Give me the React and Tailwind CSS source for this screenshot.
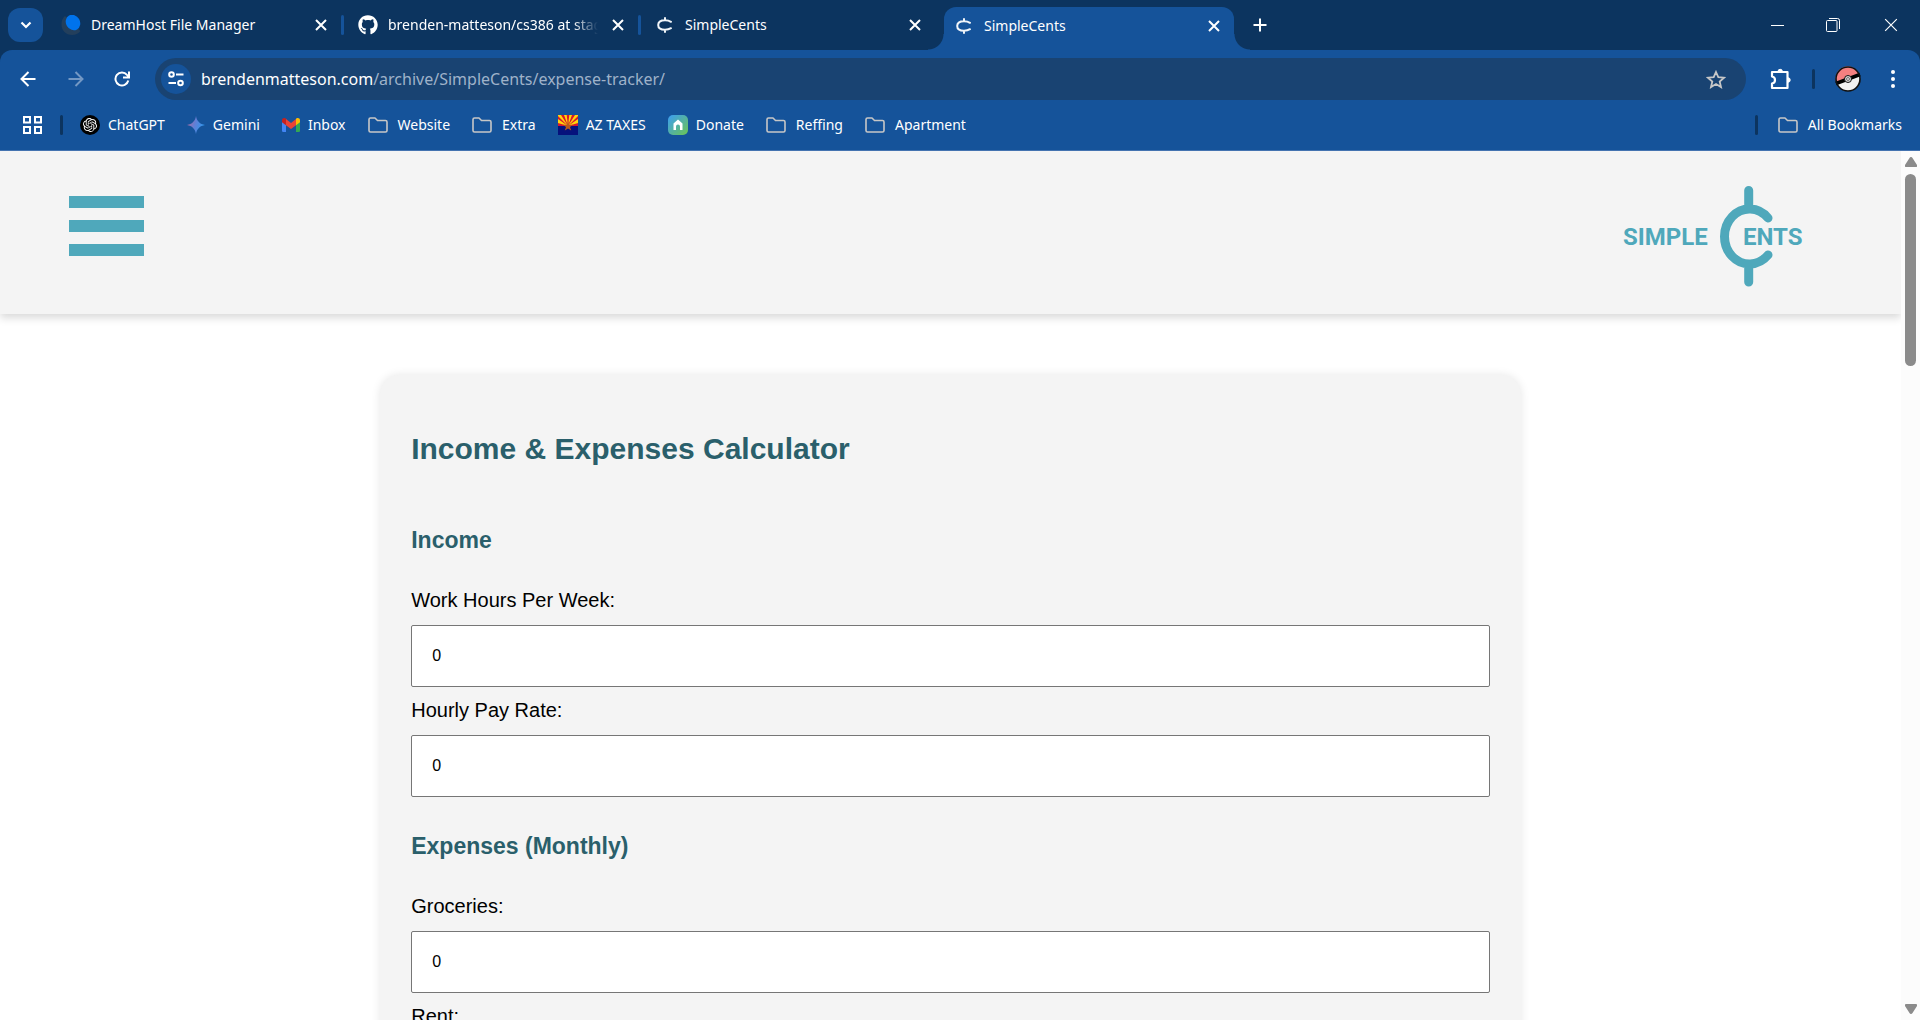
import React from "react";
import { SiOpenai } from "react-icons/si";
import { FaGithub } from "react-icons/fa";

const ui = "font-['Noto_Sans','Open_Sans',sans-serif]";

function DreamHostIcon() {
  return (
    <svg width="20" height="20" viewBox="0 0 20 20" aria-hidden="true">
      <path d="M4 1C1.500 3 .5 6 .5 9.500 .5 15.500 5 20 11 20c3.500 0 6.500-1.500 8.500-4L12 9z" fill="#233f5c" />
      <ellipse cx="12" cy="7.500" rx="7" ry="8" fill="#0073ec" transform="rotate(-30 12 7.500)" />
    </svg>
  );
}

function CentIcon() {
  return (
    <svg width="16" height="16" viewBox="0 0 16 16" fill="none" stroke="#f1f5f9" strokeWidth="2" strokeLinecap="round" aria-hidden="true">
      <path d="M14 4.800C12.500 3.800 10.500 3.200 8 3.200 4 3.200 1.200 5 1.200 8S4 12.800 8 12.800c2.500 0 4.500-.6 6-1.600M8 1v2M8 13v2" />
    </svg>
  );
}

function CloseIcon({ size = 12, w = 2 }) {
  return (
    <svg width={size} height={size} viewBox="0 0 12 12" fill="none" stroke="#fff" strokeWidth={w} aria-hidden="true">
      <path d="M1 1l10 10M11 1L1 11" />
    </svg>
  );
}

function FolderIcon() {
  return (
    <svg className="mr-0.5" width="20" height="16" viewBox="0 0 20 16" fill="none" stroke="#c7c7c7" strokeWidth="1.600" strokeLinejoin="round" aria-hidden="true">
      <path d="M1 2.500Q1 1 2.500 1H7l2.500 2.500h8Q19 3.500 19 5v8.500q0 1.500-1.500 1.500h-15Q1 15 1 13.500z" />
    </svg>
  );
}

function GeminiIcon() {
  return (
    <svg width="18" height="18" viewBox="0 0 18 18" aria-hidden="true">
      <defs>
        <linearGradient id="gem" x1="0" x2="1" y1="0.300" y2="0.600">
          <stop offset="0" stopColor="#b06a9c" />
          <stop offset=".45" stopColor="#5f7fd6" />
          <stop offset="1" stopColor="#2b9bf0" />
        </linearGradient>
      </defs>
      <path d="M9 0C9.700 5 13 8.300 18 9 13 9.700 9.700 13 9 18 8.300 13 5 9.700 0 9 5 8.300 8.300 5 9 0z" fill="url(#gem)" />
    </svg>
  );
}

function GmailIcon() {
  return (
    <svg width="18" height="14" viewBox="0 0 18 14" aria-hidden="true">
      <path d="M0 3v9.700Q0 14 1.300 14H4V6z" fill="#4285f4" />
      <path d="M18 3v9.700q0 1.300-1.300 1.300H14V6z" fill="#34a853" />
      <path d="M14 2v5.200l4-3V2.200C18 .2 15.800-.6 14.300.5L14 .8z" fill="#fbbc04" />
      <path d="M4 7.200V1l5 3.900L14 1v6.200L9 11z" fill="#ea4335" />
      <path d="M0 2.200v2l4 3V1L3.700.5C2.200-.6 0 .2 0 2.200z" fill="#c5221f" />
    </svg>
  );
}

function ArizonaIcon() {
  return (
    <svg width="20" height="20" viewBox="0 0 20 20" aria-hidden="true">
      <rect width="20" height="20" fill="#d8172f" />
      <path d="M10 11L0 8V4zM10 11L0 1V0h3zM10 11L6 0h2.700zM10 11L11.300 0H14zM10 11l7-11h3v1zM10 11l10-7v4z" fill="#ffd60a" />
      <rect y="11" width="20" height="9" fill="#06127c" />
      <path d="M10 6l1.200 3.700h3.900L12 12l1.200 3.600L10 13.400l-3.200 2.200L8 12 4.900 9.700h3.900z" fill="#b9581c" />
    </svg>
  );
}

function DonateIcon() {
  return (
    <svg width="20" height="20" viewBox="0 0 20 20" aria-hidden="true">
      <defs>
        <linearGradient id="don" x1="0" x2="1" y1="0" y2="1">
          <stop offset="0" stopColor="#3b9df5" />
          <stop offset="1" stopColor="#6cc551" />
        </linearGradient>
      </defs>
      <rect width="20" height="20" rx="5" fill="url(#don)" />
      <path d="M10 4.500L5.500 8.500V15H8v-3.500a2 2 0 0 1 4 0V15h2.500V8.500z" fill="#fff" />
    </svg>
  );
}

function Tab({ icon, title, fade, divider }) {
  return (
    <div className="flex h-full w-[297px] min-w-0 items-center pl-3.5">
      <span className="flex w-5 shrink-0 justify-center">{icon}</span>
      <span className={`ml-2.5 min-w-0 flex-1 overflow-hidden whitespace-nowrap text-sm ${fade ? "[mask-image:linear-gradient(to_right,black_88%,transparent)]" : ""}`}>{title}</span>
      <button aria-label={`Close ${title}`} className="ml-1 flex w-8 shrink-0 justify-center"><CloseIcon /></button>
      <span className={`ml-1 h-5 w-[3px] shrink-0 rounded ${divider ? "bg-[#15539a]" : ""}`} />
    </div>
  );
}

function TabStrip() {
  return (
    <div className="flex h-[50px] items-center bg-[#0c345f] text-white">
      <button aria-label="Search tabs" className="ml-2 flex h-[34px] w-[35px] shrink-0 items-center justify-center rounded-xl bg-[#15539a]">
        <svg width="12" height="8" viewBox="0 0 12 8" fill="none" stroke="#fff" strokeWidth="2.200" aria-hidden="true"><path d="M1.500 1.500L6 6l4.500-4.500" /></svg>
      </button>
      <div className="flex h-full items-center pr-1.5 pl-1">
        <Tab icon={<DreamHostIcon />} title="DreamHost File Manager" divider />
        <Tab icon={<FaGithub size={20} aria-hidden="true" />} title="brenden-matteson/cs386 at staging" fade divider />
        <Tab icon={<CentIcon />} title="SimpleCents" />
      </div>
      <div className="relative mt-[7px] flex h-[43px] w-[290px] shrink-0 items-center rounded-t-xl bg-[#15539a] pb-1.5">
        <span className="absolute -left-4 bottom-0 size-4 bg-[radial-gradient(circle_at_top_left,#0c345f_15px,#15539a_16px)]" />
        <span className="absolute -right-4 bottom-0 size-4 bg-[radial-gradient(circle_at_top_right,#0c345f_15px,#15539a_16px)]" />
        <span className="ml-2.5 flex w-5 justify-center"><CentIcon /></span>
        <span className="ml-2.5 flex-1 text-sm">SimpleCents</span>
        <button aria-label="Close SimpleCents" className="mr-1 flex w-8 justify-center"><CloseIcon /></button>
      </div>
      <button aria-label="New tab" className="ml-[18px] flex size-4 items-center justify-center">
        <svg width="14" height="14" viewBox="0 0 14 14" stroke="#fff" strokeWidth="2" aria-hidden="true"><path d="M7 0.500v13M.5 7h13" /></svg>
      </button>
      <div className="flex-1" />
      <div className="flex items-center">
        <button aria-label="Minimize" className="flex w-[54px] justify-center"><span className="h-px w-[13px] bg-white" /></button>
        <button aria-label="Restore" className="flex w-[58px] justify-center">
          <svg width="14" height="14" viewBox="0 0 14 14" fill="none" stroke="#fff" aria-hidden="true"><rect x=".5" y="2.500" width="10.500" height="11" rx="1" /><path d="M3 .5h8.500q2 0 2 2V11" /></svg>
        </button>
        <button aria-label="Close window" className="flex w-[58px] justify-center"><CloseIcon size={14} w={1} /></button>
      </div>
    </div>
  );
}

function Toolbar() {
  return (
    <div className="bg-[#0c345f]">
      <div className="flex h-[58px] items-center rounded-t-xl bg-[#15539a] text-white">
        <button aria-label="Back" className="ml-5 flex w-4 justify-center">
          <svg width="16" height="16" viewBox="0 0 16 16" fill="none" stroke="#fff" strokeWidth="2" aria-hidden="true"><path d="M15.500 8H2M8.500 1L1.500 8l7 7" /></svg>
        </button>
        <button aria-label="Forward" className="ml-8 flex w-4 justify-center">
          <svg width="16" height="16" viewBox="0 0 16 16" fill="none" stroke="#7398c4" strokeWidth="2" aria-hidden="true"><path d="M.5 8H14M7.500 1l7 7-7 7" /></svg>
        </button>
        <button aria-label="Reload" className="ml-[30px] flex w-4 justify-center">
          <svg width="16" height="16" viewBox="0 0 16 16" fill="none" stroke="#fff" strokeWidth="2" aria-hidden="true"><path d="M14.300 9.500A6.500 6.500 0 1 1 13 3.800L14.500 5.500M15 .5v6H9" /></svg>
        </button>
        <div className="ml-[25px] flex h-[42px] min-w-0 flex-1 items-center rounded-full bg-[#194372] px-1.5">
          <button aria-label="View site information" className="flex size-[30px] shrink-0 items-center justify-center rounded-full bg-[#15539a]">
            <svg width="16" height="16" viewBox="0 0 16 16" fill="none" stroke="#fff" strokeWidth="2" aria-hidden="true"><circle cx="3.500" cy="3.500" r="2.300" /><circle cx="12.500" cy="12" r="2.300" /><path d="M8 3.500h7.500M.5 12H8" /></svg>
          </button>
          <div className="ml-2.5 flex-1 text-base text-[#9fb2c9]"><span className="text-white">brendenmatteson.com</span>/archive/SimpleCents/expense-tracker/</div>
          <button aria-label="Bookmark this tab" className="mr-3.5">
            <svg width="20" height="19" viewBox="0 0 20 19" fill="none" stroke="#c7c7c7" strokeWidth="1.800" aria-hidden="true"><path d="M10 2l2.300 5.200 5.700.5-4.300 3.800 1.300 5.600-5-3-5 3 1.300-5.600L2 7.700l5.700-.5z" /></svg>
          </button>
        </div>
        <button aria-label="Extensions" className="ml-6">
          <svg width="22" height="22" viewBox="0 0 22 22" fill="none" stroke="#fff" strokeWidth="2.200" strokeLinejoin="round" aria-hidden="true"><path d="M2 4h15.500v16H2v-4.500c4-.5 4-6.500 0-7z" /><path d="M8 3.500a2.200 2.200 0 0 1 4.400 0zM18 9.800a2.200 2.200 0 0 1 0 4.400z" fill="#fff" strokeWidth="1" /></svg>
        </button>
        <span className="ml-5 h-5 w-[3px] rounded bg-[#0c345f]" />
        <button aria-label="Profile" className="ml-5">
          <svg width="26" height="26" viewBox="0 0 26 26" aria-hidden="true">
            <circle cx="13" cy="13" r="12" fill="#f2f2f2" />
            <path d="M1.500 17A12 12 0 1 1 24 8z" fill="#f58080" />
            <path d="M1 17.500L25 8.500" stroke="#000" strokeWidth="3.600" />
            <circle cx="13" cy="13" r="12" fill="none" stroke="#111" strokeWidth="1.600" />
            <circle cx="13" cy="13" r="3.500" fill="#ddd" stroke="#111" strokeWidth="1" />
            <circle cx="13" cy="13" r="1.500" fill="none" stroke="#555" strokeWidth=".8" />
          </svg>
        </button>
        <button aria-label="Menu" className="mr-[25px] ml-[30px] flex flex-col gap-[3px]">
          <span className="size-1 rounded-full bg-white" /><span className="size-1 rounded-full bg-white" /><span className="size-1 rounded-full bg-white" />
        </button>
      </div>
    </div>
  );
}

function Bookmark({ icon, children }) {
  return <a href="#" className="flex shrink-0 items-center gap-2">{icon}<span>{children}</span></a>;
}

function Bookmarks() {
  return (
    <div className="flex h-[43px] items-center border-b border-[#4473b0] bg-[#15539a] pr-[18px] pb-2 pl-[23px] text-sm whitespace-nowrap text-white">
      <button aria-label="Apps">
        <svg width="19" height="18" viewBox="0 0 19 18" fill="none" stroke="#fff" strokeWidth="2" aria-hidden="true"><path d="M1 1h6v5.500H1zM12 1h6v5.500h-6zM1 11h6v6H1zM12 11h6v6h-6z" /></svg>
      </button>
      <span className="ml-[18px] h-5 w-[3px] rounded bg-[#0c345f]" />
      <div className="ml-[17px] flex items-center gap-[22px]">
        <Bookmark icon={<span className="flex size-5 items-center justify-center rounded-full bg-black"><SiOpenai size={14} /></span>}>ChatGPT</Bookmark>
        <Bookmark icon={<GeminiIcon />}>Gemini</Bookmark>
        <Bookmark icon={<GmailIcon />}>Inbox</Bookmark>
        <Bookmark icon={<FolderIcon />}>Website</Bookmark>
        <Bookmark icon={<FolderIcon />}>Extra</Bookmark>
        <Bookmark icon={<ArizonaIcon />}>AZ TAXES</Bookmark>
        <Bookmark icon={<DonateIcon />}>Donate</Bookmark>
        <Bookmark icon={<FolderIcon />}>Reffing</Bookmark>
        <Bookmark icon={<FolderIcon />}>Apartment</Bookmark>
      </div>
      <div className="flex-1" />
      <span className="mr-5 h-5 w-[3px] rounded bg-[#0c345f]" />
      <Bookmark icon={<FolderIcon />}>All Bookmarks</Bookmark>
    </div>
  );
}

function Logo() {
  return (
    <svg width="184" height="102" viewBox="0 0 184 102" role="img" aria-label="SimpleCents" fill="#4fa8bb">
      <text x="3" y="59" fontFamily="Roboto, sans-serif" fontWeight="700" fontSize="24">SIMPLE</text>
      <text x="123" y="59" fontFamily="Roboto, sans-serif" fontWeight="700" fontSize="24">ENTS</text>
      <path d="M148 32A25 27.500 0 1 0 148 69M128.700 4.500V20M128.700 79V96" fill="none" stroke="#4fa8bb" strokeWidth="9" strokeLinecap="round" />
    </svg>
  );
}

function Field({ id, label }) {
  return (
    <div>
      <label htmlFor={id} className="block pb-0.5 text-xl leading-[46px]">{label}</label>
      <input id={id} type="text" inputMode="decimal" defaultValue="0" className="block h-[62px] w-full rounded-xs border border-[#767676] bg-white px-5 text-base" />
    </div>
  );
}

export default function App() {
  return (
    <div className="flex h-screen flex-col overflow-hidden bg-white">
      <div className={`shrink-0 ${ui}`}>
        <TabStrip />
        <Toolbar />
        <Bookmarks />
      </div>
      <div className="flex min-h-0 flex-1">
        <div className="min-w-0 flex-1 overflow-hidden font-['Liberation_Sans',Arial,sans-serif] text-black">
          <header className="relative flex h-[163px] items-start justify-between bg-[#f4f4f4] pt-[35px] pr-[97px] pl-[69px] shadow-[0_4px_8px_rgba(0,0,0,0.15)]">
            <button aria-label="Open menu" className="mt-2.5 flex flex-col gap-3">
              <span className="h-3 w-[75px] bg-[#4fa8bb]" /><span className="h-3 w-[75px] bg-[#4fa8bb]" /><span className="h-3 w-[75px] bg-[#4fa8bb]" />
            </button>
            <Logo />
          </header>
          <main className="mx-auto mt-[61px] w-3/5 rounded-[20px] bg-[#f4f4f4] px-[31px] pt-14 pb-8 shadow-[0_0_10px_rgba(0,0,0,0.1)]">
            <h1 className="text-3xl leading-9 font-bold text-[#2a5f6b]">Income &amp; Expenses Calculator</h1>
            <h2 className="mt-[59px] mb-[23px] text-[23px] leading-7 font-bold text-[#2a5f6b]">Income</h2>
            <Field id="hours" label="Work Hours Per Week:" />
            <Field id="rate" label="Hourly Pay Rate:" />
            <h2 className="mt-[35px] mb-[23px] text-[23px] leading-7 font-bold text-[#2a5f6b]">Expenses (Monthly)</h2>
            <Field id="groceries" label="Groceries:" />
            <Field id="rent" label="Rent:" />
          </main>
        </div>
        <div className="flex w-[19px] shrink-0 flex-col items-center bg-[#fcfcfc] pt-1.5 pb-1.5" aria-hidden="true">
          <svg width="12" height="10" viewBox="0 0 12 10" fill="#8b8b8b"><path d="M6 0q1 0 1.500 1L12 8q.5 2-1 2H1Q-.5 10 0 8l4.500-7Q5 0 6 0z" /></svg>
          <div className="mt-[7px] h-[192px] w-[11px] rounded-full bg-[#8b8b8b]" />
          <div className="flex-1" />
          <svg width="12" height="10" viewBox="0 0 12 10" fill="#8b8b8b"><path d="M6 10q1 0 1.500-1L12 2q.5-2-1-2H1Q-.5 0 0 2l4.500 7Q5 10 6 10z" /></svg>
        </div>
      </div>
    </div>
  );
}
